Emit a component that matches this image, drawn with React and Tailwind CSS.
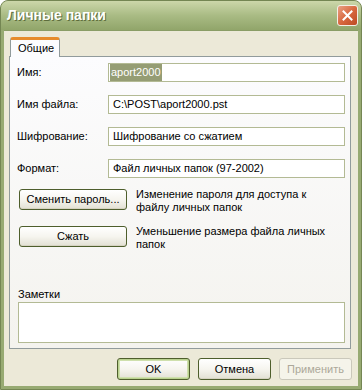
import React from "react";

function XPButton({ children, className = "", def = false, disabled = false }) {
  if (disabled) {
    return (
      <div className={"h-[21px] w-[73px] rounded-[3px] border border-[#cac8bb] bg-[#f5f4ea] flex items-center justify-center text-[#aca899] " + className}>
        {children}
      </div>
    );
  }
  return (
    <div className={"rounded-[3px] border border-[#4e5e2c] bg-gradient-to-b from-[#ffffff] via-[#f6f5ef] to-[#e2e0d3] flex items-center justify-center text-black " + (def ? "shadow-[inset_0_0_0_1px_#b9d18e,inset_0_0_0_2px_#cfe0ad] " : "shadow-[inset_0_-1px_0_#d6d3c2] ") + className}>
      {children}
    </div>
  );
}

function Field({ label, children }) {
  return (
    <div className="flex items-center h-[19px]">
      <div className="w-[91px] shrink-0">{label}</div>
      <div className="h-[19px] w-[237px] border border-[#b3ba94] bg-white flex items-center pl-[4px] text-black">
        {children}
      </div>
    </div>
  );
}

export default function App() {
  return (
    <div
      className="w-[362px] h-[390px] flex flex-col rounded-t-[8px] bg-[#97aa72] border border-[#748653] text-[11px] text-black overflow-hidden"
      style={{ fontFamily: '"Liberation Sans", Arial, sans-serif' }}
    >
      {/* Title bar */}
      <div className="h-[29px] shrink-0 flex items-center justify-between pl-[6px] pr-[3px] bg-gradient-to-b from-[#ccd7aa] via-[#a9bb84] to-[#91a56a]">
        <div className="text-white font-bold text-[14px] [text-shadow:1px_1px_0_#5d6d3c]">
          Личные папки
        </div>
        <div className="w-[21px] h-[21px] rounded-[3px] border border-[#f3efe6] bg-gradient-to-br from-[#e8a184] via-[#d8683f] to-[#bd4a22] flex items-center justify-center">
          <svg width="11" height="11" viewBox="0 0 11 11">
            <path d="M1.5 1.5 L9.5 9.5 M9.5 1.5 L1.5 9.5" stroke="#ffffff" strokeWidth="2" strokeLinecap="square" />
          </svg>
        </div>
      </div>

      {/* Body */}
      <div className="flex-1 mx-[3px] mb-[3px] bg-[#ece9d8] flex flex-col pl-[5px] pr-[7px] pt-[6px] pb-[6px] border-t border-[#8a9d66]">
        {/* Tab */}
        <div className="relative z-10 -mb-px ml-[1px] w-[50px] h-[20px] border-x border-[#919b9c] rounded-t-[3px] bg-[#fcfcfe] border-t-[3px] border-t-[#e68b2c] flex items-center pl-[7px] pb-[1px]">
          Общие
        </div>
        {/* Panel */}
        <div className="h-[293px] border border-[#919b9c] bg-gradient-to-b from-[#fcfcfe] to-[#f4f3ee] flex flex-col pl-[7px] pr-[5px] pt-[6px] pb-[5px]">
          <div className="flex flex-col gap-[13px]">
            <Field label="Имя:">
              <span className="bg-[#959d74] text-white px-[1px] -ml-[3px]">aport2000</span>
            </Field>
            <Field label="Имя файла:">C:\POST\aport2000.pst</Field>
            <Field label="Шифрование:">Шифрование со сжатием</Field>
            <Field label="Формат:">Файл личных папок (97-2002)</Field>
          </div>

          <div className="mt-[11px] flex items-start">
            <XPButton className="w-[108px] h-[21px] ml-[2px]">Сменить пароль...</XPButton>
            <div className="ml-[9px] leading-[13px] mt-[-1px]">
              Изменение пароля для доступа к<br />файлу личных папок
            </div>
          </div>
          <div className="mt-[12px] flex items-start">
            <XPButton className="w-[108px] h-[21px] ml-[2px]">Сжать</XPButton>
            <div className="ml-[9px] leading-[13px] mt-[-1px]">
              Уменьшение размера файла личных<br />папок
            </div>
          </div>

          <div className="flex-1" />
          <div className="ml-[1px] mb-[1px] leading-[13px]">Заметки</div>
          <div className="h-[41px] ml-[1px] w-[327px] border border-[#b3ba94] bg-white" />
        </div>

        {/* Bottom buttons */}
        <div className="mt-[9px] flex justify-end gap-[8px] -mr-[1px]">
          <XPButton def className="w-[73px] h-[22px]">OK</XPButton>
          <XPButton className="w-[73px] h-[22px]">Отмена</XPButton>
          <XPButton disabled className="h-[22px]">Применить</XPButton>
        </div>
      </div>
    </div>
  );
}
